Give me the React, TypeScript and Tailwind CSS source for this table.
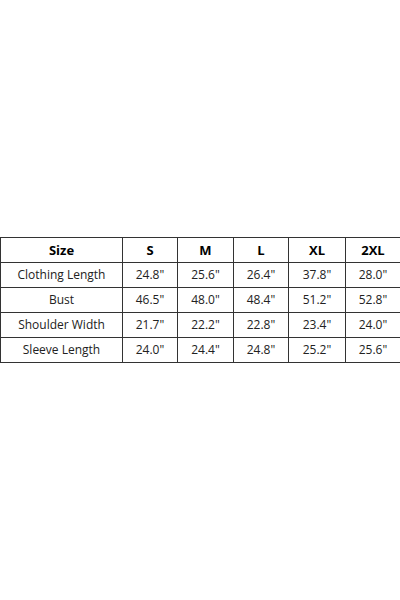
const headers = ["Size", "S", "M", "L", "XL", "2XL"];

const rows = [
  ["Clothing Length", "24.8\"", "25.6\"", "26.4\"", "37.8\"", "28.0\""],
  ["Bust", "46.5\"", "48.0\"", "48.4\"", "51.2\"", "52.8\""],
  ["Shoulder Width", "21.7\"", "22.2\"", "22.8\"", "23.4\"", "24.0\""],
  ["Sleeve Length", "24.0\"", "24.4\"", "24.8\"", "25.2\"", "25.6\""],
];

const widths = ["w-[122px]", "w-[55px]", "w-[56px]", "w-[55px]", "w-[57px]", "w-[55px]"];

export default function App() {
  return (
    <main className="h-[600px] w-[400px] bg-white pt-[237px] font-['Open_Sans',sans-serif] text-[#222]">
      <table className="w-[400px] table-fixed border-collapse">
        <colgroup>
          {widths.map((w, i) => (
            <col key={i} className={w} />
          ))}
        </colgroup>
        <thead>
          <tr className="h-[25px]">
            {headers.map((h) => (
              <th key={h} className="border border-[#333] p-0 text-center text-[13px] font-bold leading-none text-black">
                {h}
              </th>
            ))}
          </tr>
        </thead>
        <tbody>
          {rows.map((r) => (
            <tr key={r[0]} className="h-[25px]">
              {r.map((c, i) => (
                <td key={i} className="border border-[#333] p-0 text-center text-[12px] leading-none">
                  {c}
                </td>
              ))}
            </tr>
          ))}
        </tbody>
      </table>
    </main>
  );
}
